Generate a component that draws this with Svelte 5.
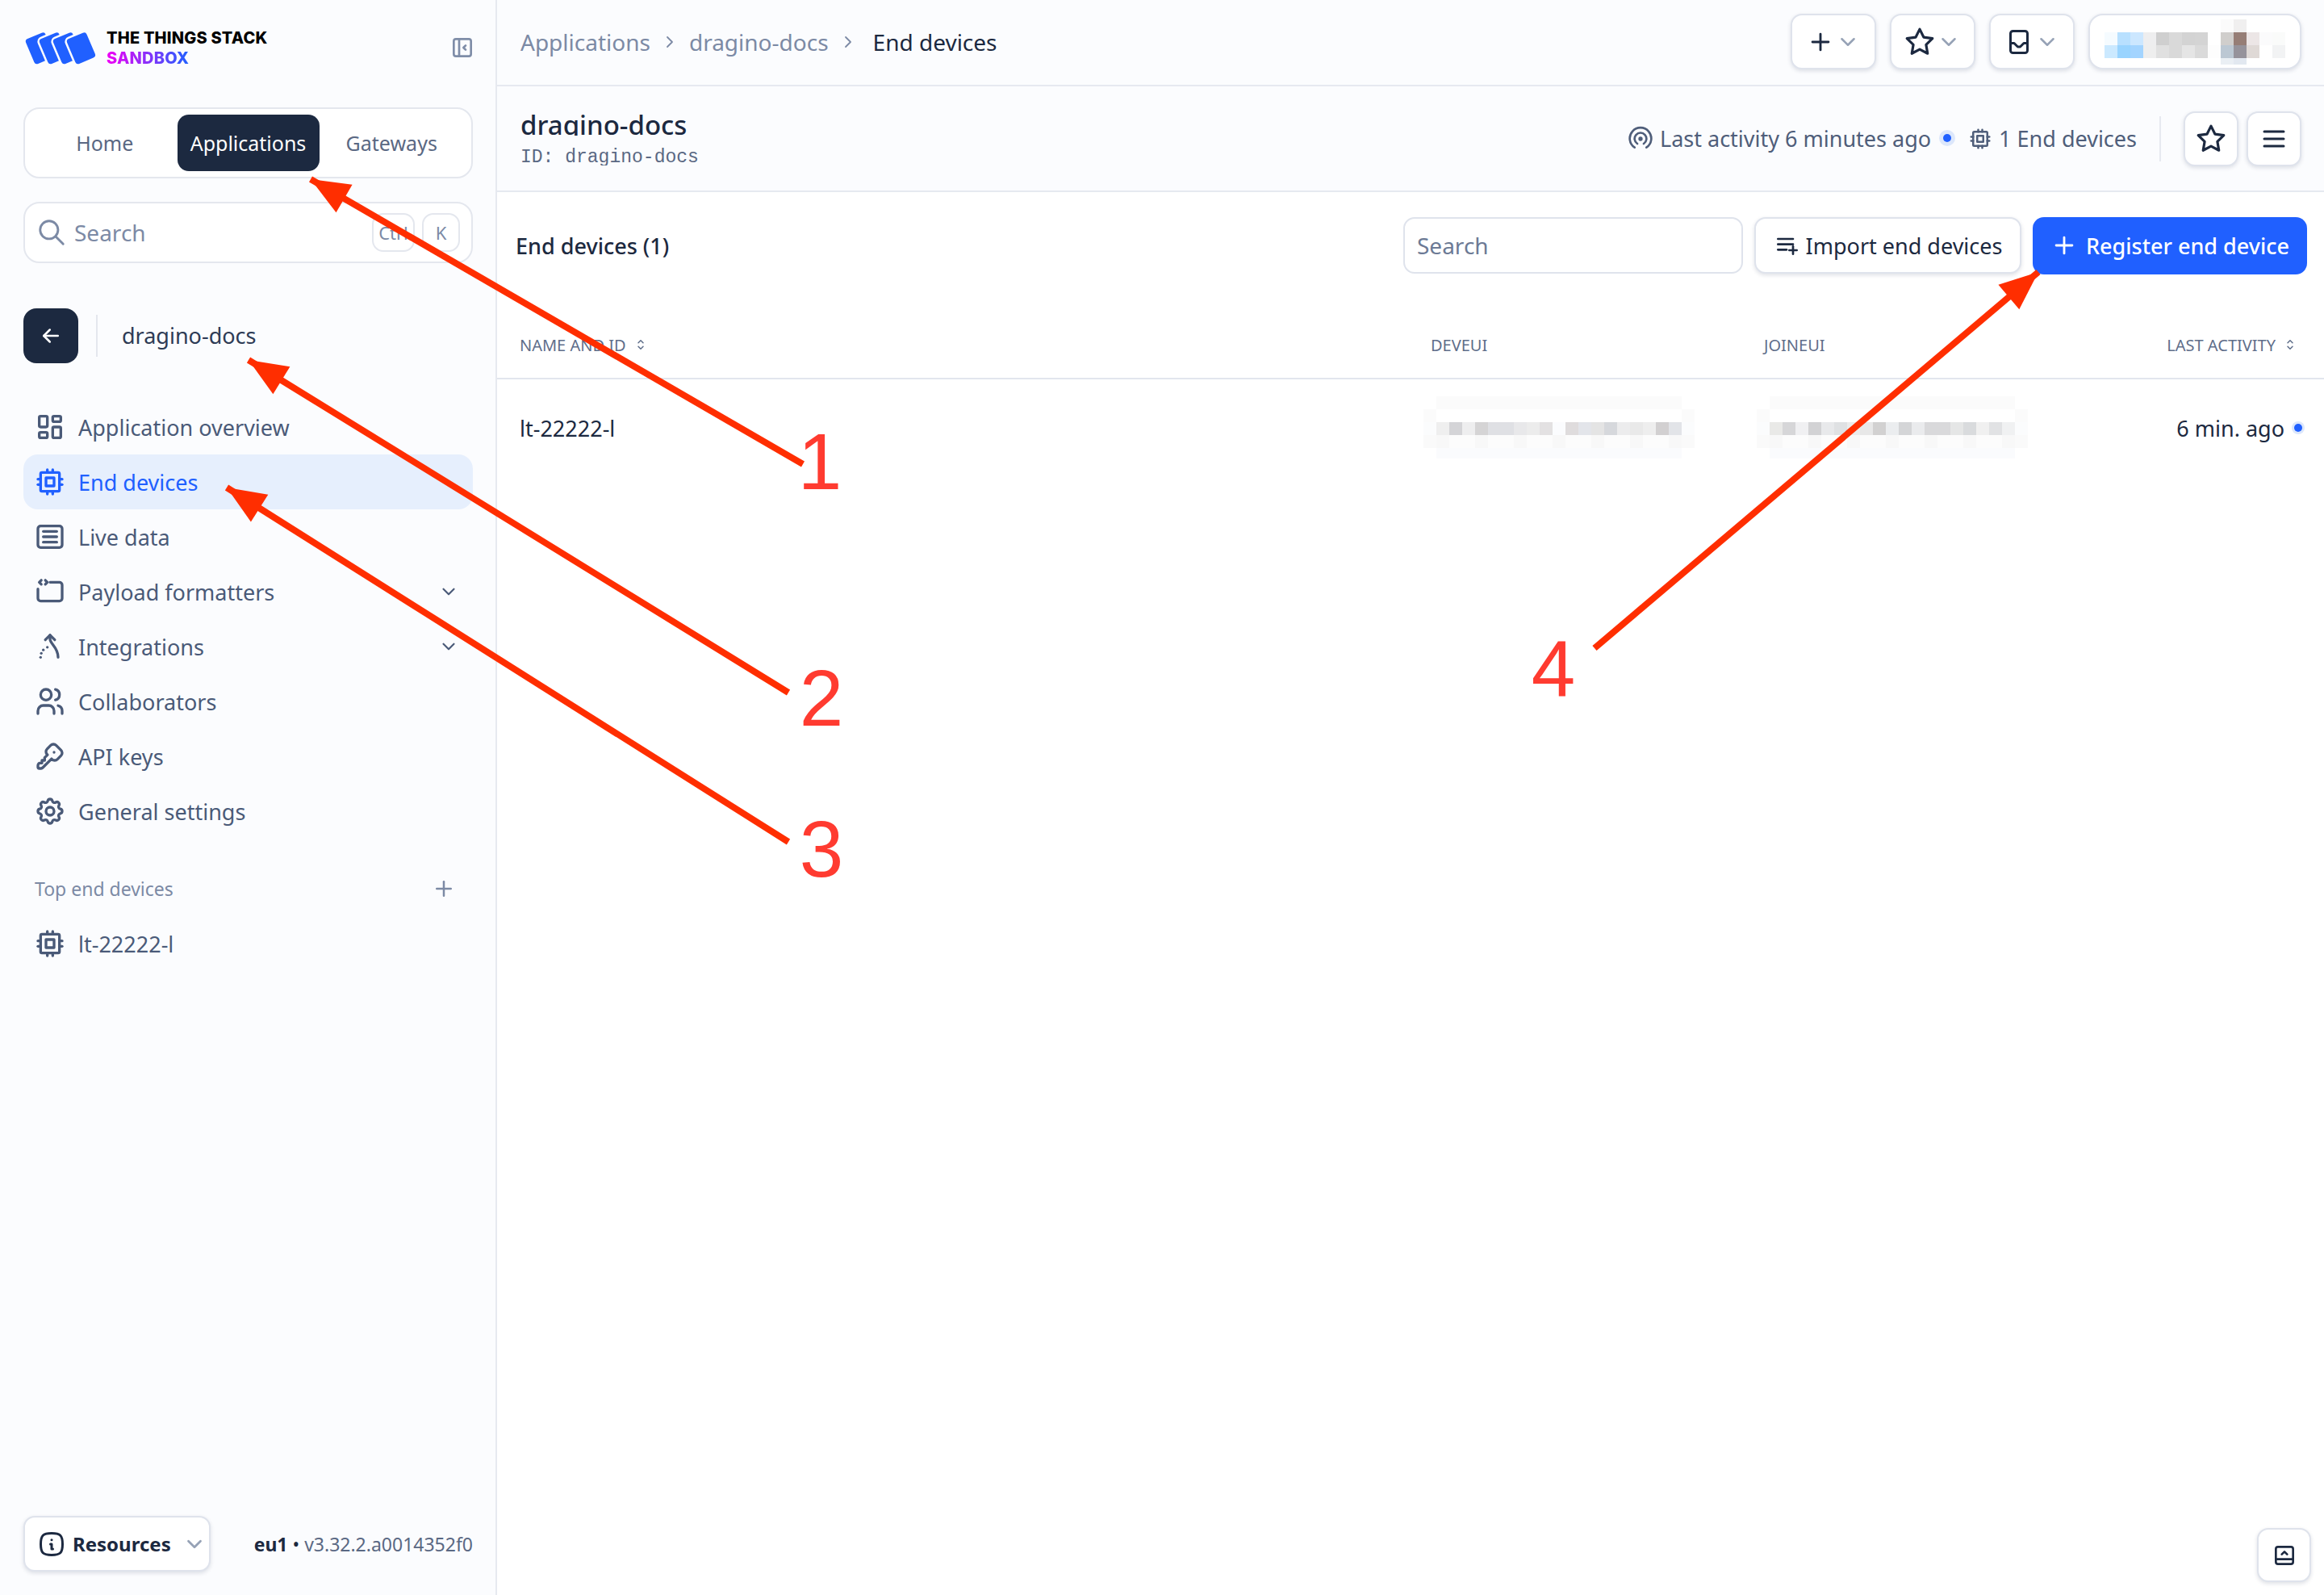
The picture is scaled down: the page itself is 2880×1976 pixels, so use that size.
<script lang="ts">
  const icons: Record<string, string[]> = {
    overview: [
      'M5 4h4a1 1 0 0 1 1 1v6a1 1 0 0 1 -1 1h-4a1 1 0 0 1 -1 -1v-6a1 1 0 0 1 1 -1',
      'M5 16h4a1 1 0 0 1 1 1v2a1 1 0 0 1 -1 1h-4a1 1 0 0 1 -1 -1v-2a1 1 0 0 1 1 -1',
      'M15 12h4a1 1 0 0 1 1 1v6a1 1 0 0 1 -1 1h-4a1 1 0 0 1 -1 -1v-6a1 1 0 0 1 1 -1',
      'M15 4h4a1 1 0 0 1 1 1v2a1 1 0 0 1 -1 1h-4a1 1 0 0 1 -1 -1v-2a1 1 0 0 1 1 -1'
    ],
    cpu: [
      'M5 6a1 1 0 0 1 1 -1h12a1 1 0 0 1 1 1v12a1 1 0 0 1 -1 1h-12a1 1 0 0 1 -1 -1z',
      'M9 9h6v6h-6z',
      'M3 10h2', 'M3 14h2', 'M10 3v2', 'M14 3v2', 'M21 10h-2', 'M21 14h-2', 'M14 21v-2', 'M10 21v-2'
    ],
    live: [
      'M3 6a2 2 0 0 1 2 -2h14a2 2 0 0 1 2 2v12a2 2 0 0 1 -2 2h-14a2 2 0 0 1 -2 -2z',
      'M7 8h10', 'M7 12h10', 'M7 16h10'
    ],
    payload: [
      'M12 5h7a2 2 0 0 1 2 2v10a2 2 0 0 1 -2 2h-14a2 2 0 0 1 -2 -2v-7',
      'M5.5 3.5l-1.5 1.5l1.5 1.5', 'M8.5 3.5l1.5 1.5l-1.5 1.5'
    ],
    integrations: [
      'M12 3.5v3c0 3.5 6 6 6 13.5', 'M8.5 7l3.5 -3.5l3.5 3.5',
      'M5 20v.01', 'M5.5 17v.01', 'M7 14.5v.01', 'M10 12.5v.01'
    ],
    users: [
      'M5 7a4 4 0 1 0 8 0a4 4 0 1 0 -8 0',
      'M3 21v-2a4 4 0 0 1 4 -4h4a4 4 0 0 1 4 4v2',
      'M16 3.13a4 4 0 0 1 0 7.75', 'M21 21v-2a4 4 0 0 0 -3 -3.85'
    ],
    key: [
      'M16.555 3.843l3.602 3.602a2.877 2.877 0 0 1 0 4.069l-2.643 2.643a2.877 2.877 0 0 1 -4.069 0l-.301 -.301l-6.558 6.558a2 2 0 0 1 -1.239 .578l-.175 .008h-1.172a1 1 0 0 1 -.993 -.883l-.007 -.117v-1.172a2 2 0 0 1 .467 -1.284l.119 -.13l.414 -.414h2v-2h2v-2l2.144 -2.144l-.301 -.301a2.877 2.877 0 0 1 0 -4.069l2.643 -2.643a2.877 2.877 0 0 1 4.069 0z',
      'M15 9h.01'
    ],
    settings: [
      'M10.325 4.317c.426 -1.756 2.924 -1.756 3.35 0a1.724 1.724 0 0 0 2.573 1.066c1.543 -.94 3.31 .826 2.37 2.37a1.724 1.724 0 0 0 1.065 2.572c1.756 .426 1.756 2.924 0 3.35a1.724 1.724 0 0 0 -1.066 2.573c.94 1.543 -.826 3.31 -2.37 2.37a1.724 1.724 0 0 0 -2.572 1.065c-.426 1.756 -2.924 1.756 -3.35 0a1.724 1.724 0 0 0 -2.573 -1.066c-1.543 .94 -3.31 -.826 -2.37 -2.37a1.724 1.724 0 0 0 -1.065 -2.572c-1.756 -.426 -1.756 -2.924 0 -3.35a1.724 1.724 0 0 0 1.066 -2.573c-.94 -1.543 .826 -3.31 2.37 -2.37c1 .608 2.296 .07 2.572 -1.065z',
      'M9 12a3 3 0 1 0 6 0a3 3 0 0 0 -6 0'
    ],
    star: ['M12 17.75l-6.172 3.245l1.179 -6.873l-5 -4.867l6.9 -1l3.086 -6.253l3.086 6.253l6.9 1l-5 4.867l1.179 6.873z'],
    inbox: [
      'M5 5a2 2 0 0 1 2 -2h10a2 2 0 0 1 2 2v14a2 2 0 0 1 -2 2h-10a2 2 0 0 1 -2 -2z',
      'M5 13h3l3 3h2l3 -3h3'
    ],
    signal: [
      'M6.5 20a10 10 0 1 1 11 0', 'M9 16.5a5.5 5.5 0 1 1 6 0',
      'M11 12a1 1 0 1 0 2 0a1 1 0 1 0 -2 0'
    ],
    importList: ['M4 6h14', 'M4 11h14', 'M4 16h8', 'M18 13v7', 'M14.5 16.500h7'],
    info: ['M12 8.500h.01', 'M11 12h1v4h1', 'M12 3c7.2 0 9 1.800 9 9s-1.800 9 -9 9s-9 -1.800 -9 -9s1.800 -9 9 -9z'],
    collapse: [
      'M4 6a2 2 0 0 1 2 -2h12a2 2 0 0 1 2 2v12a2 2 0 0 1 -2 2h-12a2 2 0 0 1 -2 -2z',
      'M9 4v16', 'M15 10l-2 2l2 2'
    ],
    search: ['M3 10a7 7 0 1 0 14 0a7 7 0 1 0 -14 0', 'M21 21l-6 -6'],
    plus: ['M12 5v14', 'M5 12h14'],
    chevron: ['M6 9l6 6l6 -6'],
    right: ['M9 6l6 6l-6 6'],
    back: ['M5 12h14', 'M5 12l6 6', 'M5 12l6 -6'],
    menu: ['M4 6h16', 'M4 12h16', 'M4 18h16'],
    sort: ['M8 9l4 -4l4 4', 'M16 15l-4 4l-4 -4'],
    panel: [
      'M4 6a2 2 0 0 1 2 -2h12a2 2 0 0 1 2 2v12a2 2 0 0 1 -2 2h-12a2 2 0 0 1 -2 -2z',
      'M4 15.500h16', 'M9.500 11l2.500 -2.500l2.500 2.500'
    ]
  };

  const navItems = [
    { icon: 'overview', label: 'Application overview' },
    { icon: 'cpu', label: 'End devices', active: true },
    { icon: 'live', label: 'Live data' },
    { icon: 'payload', label: 'Payload formatters', more: true },
    { icon: 'integrations', label: 'Integrations', more: true },
    { icon: 'users', label: 'Collaborators' },
    { icon: 'key', label: 'API keys' },
    { icon: 'settings', label: 'General settings' }
  ];

  const deveui = ['#efefef', '#d4d4d7', '#eeeeef', '#d5d4d5', '#dfe0e4', '#dfe0e4', '#e8e8ea', '#ececec', '#e3e1e2', '#fbfcfe', '#dfdcdd', '#e3e5ea', '#e4e4e4', '#d6d8dc', '#ececed', '#e9e9e9', '#eeeeee', '#d2d0d1', '#e2e4e8'];
  const joineui = ['#e9e9e7', '#d6d6d8', '#f0f0f2', '#d2d2d4', '#e8e9eb', '#dfe1e3', '#ebebeb', '#e8e8e8', '#d2d1d1', '#ebedef', '#d4d5d7', '#eaebed', '#d9d9db', '#d9d9db', '#e5e6e6', '#d9dbdd', '#f0f0f0', '#e1e2e4', '#f0f1f2'];

  // five rows of a mosaic, the third one carries the hidden value
  function mosaic(values: string[]) {
    const row = (side: string, fill: (i: number) => string) => [side, ...values.map((_, i) => fill(i)), side];
    return [
      row('#ffffff', () => '#fbfbfb'),
      row('#fbfbfb', () => '#ffffff'),
      ['#fbfcfd', ...values, '#fbfcfd'],
      row('#fafafa', (i) => (i % 3 === 0 ? '#f8f8f8' : '#fcfcfc')),
      row('#ffffff', () => '#fafbfd')
    ].flat();
  }

  const profile = [
    '#fff', '#fff', '#fff', '#fff', '#fff', '#fff', '#fff', '#fff', '#fff', '#fbfbfb', '#f0efef', '#fff', '#fff', '#fff',
    '#f5fbff', '#b8e0ff', '#cce7ff', '#eeeeef', '#cfcfcf', '#d9d9d9', '#d3d3d3', '#d4d4d4', '#fff', '#d0cecc', '#967e76', '#ece6e6', '#fbfbfc', '#fafbfa',
    '#cbe9ff', '#99d4ff', '#a3d4ff', '#eeeeee', '#e0e0e0', '#d9d9d9', '#e5e5e5', '#dadada', '#fdfdfd', '#bcc8d3', '#96939b', '#dfd9d6', '#fff', '#f2f3f4',
    '#fff', '#fff', '#fff', '#fff', '#fff', '#fff', '#fff', '#fff', '#fff', '#eaeff4', '#e2e8f0', '#fff', '#fff', '#fff'
  ];

  const arrows = [
    { tip: [385, 222], tail: [995, 575] },
    { tip: [308, 446], tail: [977, 858] },
    { tip: [281, 604], tail: [977, 1043] },
    { tip: [2526, 337], tail: [1976, 803] }
  ];
  const numbers = [
    { n: '1', x: 1016, y: 606 },
    { n: '2', x: 1018, y: 899 },
    { n: '3', x: 1018, y: 1086 },
    { n: '4', x: 1925, y: 862 }
  ];

  function head(tip: number[], tail: number[]) {
    const dx = tail[0] - tip[0];
    const dy = tail[1] - tip[1];
    const len = Math.hypot(dx, dy);
    const ux = dx / len;
    const uy = dy / len;
    const bx = tip[0] + ux * 48;
    const by = tip[1] + uy * 48;
    return `${tip[0]},${tip[1]} ${bx - uy * 20},${by + ux * 20} ${bx + uy * 20},${by - ux * 20}`;
  }
</script>

{#snippet icon(name: string, size: number, stroke = 2)}
  <svg class="icon" width={size} height={size} viewBox="0 0 24 24" fill="none" stroke="currentColor" stroke-width={stroke} stroke-linecap="round" stroke-linejoin="round">
    {#each icons[name] as d}
      <path {d} />
    {/each}
  </svg>
{/snippet}

<div class="app">
  <aside class="sidebar">
    <div class="brand">
      <svg class="logo" width="94" height="48" viewBox="0 0 94 48">
        {#each [0, 17, 34, 51] as x}
          <rect x={x + 7} y="7" width="29" height="36" rx="5" fill="#2060ff" stroke="#fbfcfe" stroke-width="2.500" transform="rotate(-23 {x + 21} 25)" />
        {/each}
      </svg>
      <div class="brand-text">
        <span class="brand-name">THE THINGS STACK</span>
        <span class="brand-env">SANDBOX</span>
      </div>
      <span class="collapse">{@render icon('collapse', 32, 2)}</span>
    </div>

    <div class="tabs">
      <span>Home</span>
      <span class="tab-on">Applications</span>
      <span>Gateways</span>
    </div>

    <div class="side-search">
      {@render icon('search', 38, 1.800)}
      <span class="side-search-label">Search</span>
      <kbd>Ctrl</kbd>
      <kbd class="kbd-k">K</kbd>
    </div>

    <div class="back-row">
      <span class="back">{@render icon('back', 30, 2)}</span>
      <span class="back-name">dragino-docs</span>
    </div>

    <nav>
      {#each navItems as item}
        <div class="nav-row" class:active={item.active}>
          {@render icon(item.icon, 40, 2)}
          <span>{item.label}</span>
          {#if item.more}
            <span class="nav-more">{@render icon('chevron', 26, 2)}</span>
          {/if}
        </div>
      {/each}
    </nav>

    <div class="top-head">
      <span>Top end devices</span>
      {@render icon('plus', 30, 2)}
    </div>
    <div class="nav-row">
      {@render icon('cpu', 40, 2)}
      <span>lt-22222-l</span>
    </div>

    <div class="side-foot">
      <div class="resources">
        {@render icon('info', 36, 2)}
        <b>Resources</b>
        <span class="chev">{@render icon('chevron', 30, 2.200)}</span>
      </div>
      <div class="version"><b>eu1</b> <i>•</i> <span>v3.32.2.a0014352f0</span></div>
    </div>
  </aside>

  <main>
    <header class="topbar">
      <div class="crumbs">
        <span>Applications</span>
        {@render icon('right', 24, 1.800)}
        <span>dragino-docs</span>
        {@render icon('right', 24, 1.800)}
        <span class="crumb-now">End devices</span>
      </div>
      <div class="top-actions">
        <button class="btn top-btn">{@render icon('plus', 34, 2)}<span class="chev">{@render icon('chevron', 30, 2)}</span></button>
        <button class="btn top-btn">{@render icon('star', 38, 2)}<span class="chev">{@render icon('chevron', 30, 2)}</span></button>
        <button class="btn top-btn">{@render icon('inbox', 36, 2)}<span class="chev">{@render icon('chevron', 30, 2)}</span></button>
        <button class="btn profile">
          <span class="profile-mosaic">
            {#each profile as c}<span style="background:{c}"></span>{/each}
          </span>
        </button>
      </div>
    </header>

    <section class="app-head">
      <div class="app-title">
        <h1>dragino-docs</h1>
        <div class="app-id">ID: dragino-docs</div>
      </div>
      <div class="app-meta">
        {@render icon('signal', 32, 2)}
        <span class="meta-text">Last activity 6 minutes ago</span>
        <span class="dot halo"></span>
        <span class="meta-cpu">{@render icon('cpu', 30, 2)}</span>
        <span class="meta-text">1 End devices</span>
        <span class="meta-sep"></span>
        <button class="btn square">{@render icon('star', 38, 2)}</button>
        <button class="btn square">{@render icon('menu', 36, 2)}</button>
      </div>
    </section>

    <section class="toolbar">
      <h2>End devices (1)</h2>
      <div class="table-search">Search</div>
      <button class="btn import">{@render icon('importList', 32, 2)}<span>Import end devices</span></button>
      <button class="register">{@render icon('plus', 34, 2)}<span>Register end device</span></button>
    </section>

    <div class="table-head">
      <span class="th">NAME AND ID {@render icon('sort', 18, 2)}</span>
      <span class="th">DEVEUI</span>
      <span class="th">JOINEUI</span>
      <span class="th th-end">LAST ACTIVITY {@render icon('sort', 18, 2)}</span>
    </div>
    <div class="table-row">
      <span class="device">lt-22222-l</span>
      <span class="mosaic">{#each mosaic(deveui) as c}<span style="background:{c}"></span>{/each}</span>
      <span class="mosaic">{#each mosaic(joineui) as c}<span style="background:{c}"></span>{/each}</span>
      <span class="last-seen">6 min. ago <span class="dot small"></span></span>
    </div>

    <button class="btn corner">{@render icon('panel', 32, 2)}</button>
  </main>

  <svg class="notes" width="2880" height="1976" viewBox="0 0 2880 1976">
    {#each arrows as a}
      <line x1={a.tail[0]} y1={a.tail[1]} x2={a.tip[0]} y2={a.tip[1]} stroke="#ff2e00" stroke-width="8" />
      <polygon points={head(a.tip, a.tail)} fill="#ff2e00" />
    {/each}
    {#each numbers as t}
      <text x={t.x} y={t.y} text-anchor="middle">{t.n}</text>
    {/each}
  </svg>
</div>

<style>
  :global(body) {
    margin: 0;
    background: #ffffff;
  }

  .app {
    position: relative;
    display: flex;
    width: 2880px;
    height: 1976px;
    overflow: hidden;
    font-family: "Noto Sans", "Open Sans", sans-serif;
    font-size: 27px;
    color: #1c2940;
  }

  .icon {
    display: block;
    flex-shrink: 0;
  }

  .sidebar {
    display: flex;
    flex-direction: column;
    flex-shrink: 0;
    box-sizing: border-box;
    width: 616px;
    height: 100%;
    padding: 36px 28px 29px 29px;
    background: #fbfcfe;
    border-right: 2px solid #e6e9f0;
  }

  .brand {
    display: flex;
    align-items: center;
    height: 46px;
  }

  .logo {
    margin-left: -1px;
    margin-right: 10px;
  }

  .brand-text {
    display: flex;
    flex-direction: column;
    gap: 3px;
    font-family: Inter, sans-serif;
    font-weight: 800;
    font-size: 20px;
    line-height: 22px;
    letter-spacing: 0.2px;
  }

  .brand-name {
    color: #000000;
  }

  .brand-env {
    align-self: flex-start;
    background: linear-gradient(90deg, #f000f5, #2060ff);
    -webkit-background-clip: text;
    background-clip: text;
    color: transparent;
  }

  .collapse {
    margin-left: auto;
    margin-right: -3px;
    color: #7f8da8;
  }

  .tabs {
    display: grid;
    grid-template-columns: 1fr 176px 1fr;
    align-items: center;
    box-sizing: border-box;
    height: 88px;
    margin-top: 51px;
    padding: 0 9px;
    text-align: center;
    font-size: 25px;
    color: #5a6883;
    background: #ffffff;
    border: 2px solid #e4e7ee;
    border-radius: 20px;
  }

  .tab-on {
    padding: 15px 0;
    line-height: 40px;
    color: #ffffff;
    background: #1c2940;
    border-radius: 14px;
  }

  .side-search {
    display: flex;
    align-items: center;
    box-sizing: border-box;
    height: 76px;
    margin-top: 29px;
    padding: 0 14px 0 14px;
    color: #7c8aa5;
    background: #ffffff;
    border: 2px solid #e4e7ee;
    border-radius: 20px;
  }

  .side-search-label {
    margin-left: 9px;
    margin-right: auto;
    font-size: 28px;
  }

  kbd {
    display: flex;
    align-items: center;
    justify-content: center;
    box-sizing: border-box;
    width: 53px;
    height: 48px;
    font-family: inherit;
    font-size: 22px;
    border: 2px solid #e4e7ee;
    border-radius: 14px;
  }

  .kbd-k {
    width: 47px;
    margin-left: 9px;
  }

  .back-row {
    display: flex;
    align-items: center;
    height: 68px;
    margin-top: 56px;
  }

  .back {
    display: flex;
    align-items: center;
    justify-content: center;
    width: 68px;
    height: 68px;
    color: #ffffff;
    background: #1c2940;
    border-radius: 16px;
  }

  .back-name {
    margin-left: 22px;
    padding: 6px 0 6px 30px;
    font-size: 27px;
    line-height: 40px;
    color: #2e3b55;
    border-left: 2px solid #e4e7ee;
  }

  nav {
    margin-top: 45px;
  }

  .nav-row {
    display: flex;
    align-items: center;
    gap: 15px;
    height: 68px;
    padding-left: 13px;
    color: #4a5a78;
    border-radius: 18px;
  }

  .nav-row.active {
    color: #2060ff;
    background: #e6effd;
  }

  .nav-more {
    margin-left: auto;
    margin-right: 17px;
  }

  .top-head {
    display: flex;
    align-items: center;
    justify-content: space-between;
    height: 36px;
    margin-top: 44px;
    margin-bottom: 16px;
    padding: 0 21px 0 14px;
    font-size: 23px;
    color: #7c8aa5;
  }

  .side-foot {
    display: flex;
    align-items: center;
    justify-content: space-between;
    margin-top: auto;
  }

  .resources {
    display: flex;
    align-items: center;
    box-sizing: border-box;
    width: 232px;
    height: 69px;
    padding-left: 15px;
    background: #ffffff;
    border: 2px solid #dfe3ec;
    border-radius: 14px;
    box-shadow: 0 2px 5px rgba(30, 40, 80, 0.14);
    font-size: 24px;
  }

  .resources b {
    margin-left: 8px;
    font-weight: 700;
  }

  .resources .chev {
    margin-left: 14px;
  }

  .chev {
    color: #96a2b6;
  }

  .version {
    font-size: 23px;
    color: #5a6883;
  }

  .version b {
    color: #1c2940;
    font-weight: 700;
  }

  .version i {
    font-style: normal;
    color: #1c2940;
  }

  main {
    position: relative;
    flex: 1;
    min-width: 0;
    display: flex;
    flex-direction: column;
  }

  .topbar {
    display: flex;
    align-items: center;
    justify-content: space-between;
    box-sizing: border-box;
    height: 107px;
    padding: 0 28px 2px 29px;
    background: #fbfcfe;
    border-bottom: 2px solid #e6e9f0;
  }

  .crumbs {
    display: flex;
    align-items: center;
    gap: 9px;
    font-size: 28px;
    color: #7c8aa5;
  }

  .crumbs .icon {
    margin: 0 3px;
  }

  .crumb-now {
    color: #1c2940;
    margin-left: 7px;
  }

  .top-actions {
    display: flex;
    gap: 17px;
  }

  .btn {
    display: flex;
    align-items: center;
    justify-content: center;
    box-sizing: border-box;
    padding: 0;
    color: #1c2940;
    font: inherit;
    background: #ffffff;
    border: 2px solid #dfe3ec;
    border-radius: 14px;
    box-shadow: 0 2px 5px rgba(30, 40, 80, 0.14);
  }

  .top-btn {
    width: 106px;
    height: 69px;
    gap: 2px;
  }

  .profile {
    width: 264px;
    height: 69px;
    border-radius: 18px;
  }

  .profile-mosaic {
    display: grid;
    grid-template-columns: repeat(14, 16px);
    grid-template-rows: 16px 16px 16px 8px;
  }

  .app-head {
    display: flex;
    align-items: center;
    justify-content: space-between;
    box-sizing: border-box;
    height: 131px;
    padding: 0 28px 0 29px;
    background: #fbfcfe;
    border-bottom: 2px solid #e6e9f0;
  }

  .app-title h1 {
    height: 30px;
    margin: 0 0 15px;
    overflow: hidden;
    font-size: 33px;
    font-weight: 500;
    line-height: 33px;
  }

  .app-id {
    height: 22px;
    overflow: hidden;
    font-family: "Liberation Mono", monospace;
    font-size: 23px;
    line-height: 24px;
    color: #5a6883;
  }

  .app-meta {
    display: flex;
    align-items: center;
    color: #4f5e7a;
  }

  .meta-text {
    margin-left: 8px;
    white-space: nowrap;
  }

  .dot {
    border-radius: 50%;
    background: #2060ff;
  }

  .halo {
    width: 10px;
    height: 10px;
    margin-left: 15px;
    box-shadow: 0 0 0 5px #dce7fb;
    margin-top: -2px;
  }

  .meta-cpu {
    margin-left: 21px;
  }

  .meta-sep {
    width: 2px;
    height: 56px;
    margin: 0 28px;
    background: #e6e9f0;
  }

  .square {
    width: 68px;
    height: 68px;
    margin-left: 10px;
  }

  .meta-sep + .square {
    margin-left: 0;
  }

  .toolbar {
    display: flex;
    align-items: center;
    height: 132px;
    padding: 0 21px 0 23px;
    box-sizing: border-box;
  }

  h2 {
    flex: 1;
    margin: 0;
    font-size: 27px;
    font-weight: 500;
  }

  .table-search {
    box-sizing: border-box;
    width: 421px;
    height: 70px;
    padding-left: 15px;
    line-height: 66px;
    font-size: 28px;
    color: #6c7a95;
    background: #ffffff;
    border: 2px solid #dfe3ec;
    border-radius: 14px;
  }

  .import {
    width: 331px;
    height: 70px;
    margin-left: 14px;
    gap: 8px;
  }

  .register {
    display: flex;
    align-items: center;
    justify-content: center;
    box-sizing: border-box;
    width: 340px;
    height: 71px;
    margin-left: 14px;
    padding: 0;
    gap: 10px;
    color: #ffffff;
    font: inherit;
    font-weight: 500;
    background: #2060ff;
    border: 0;
    border-radius: 14px;
  }

  .table-head,
  .table-row {
    display: grid;
    grid-template-columns: 1129px 413px 1fr auto;
    padding: 0 24px 0 28px;
  }

  .table-head {
    align-items: center;
    height: 100px;
    border-bottom: 2px solid #e2e6ee;
    padding-top: 16px;
    box-sizing: border-box;
  }

  .th {
    display: flex;
    align-items: center;
    gap: 9px;
    font-size: 20px;
    color: #5f6e8a;
  }

  .th-end {
    padding-right: 9px;
  }

  .table-row {
    align-items: center;
    height: 120px;
  }

  .mosaic {
    display: grid;
    grid-template-columns: repeat(21, 16px);
    grid-template-rows: 16px 16px 16px 16px 13px;
    margin-left: -9px;
    margin-top: -2px;
  }

  .last-seen {
    display: flex;
    align-items: center;
    gap: 12px;
    white-space: nowrap;
  }

  .small {
    width: 10px;
    height: 10px;
    box-shadow: 0 0 0 3px #dce7fb;
    margin-right: 3px;
  }

  .corner {
    position: absolute;
    right: 16px;
    bottom: 16px;
    width: 67px;
    height: 67px;
  }

  .notes {
    position: absolute;
    left: 0;
    top: 0;
    pointer-events: none;
  }

  .notes text {
    font-family: "Liberation Sans", Arial, sans-serif;
    font-size: 98px;
    fill: #ff3b30;
  }
</style>
